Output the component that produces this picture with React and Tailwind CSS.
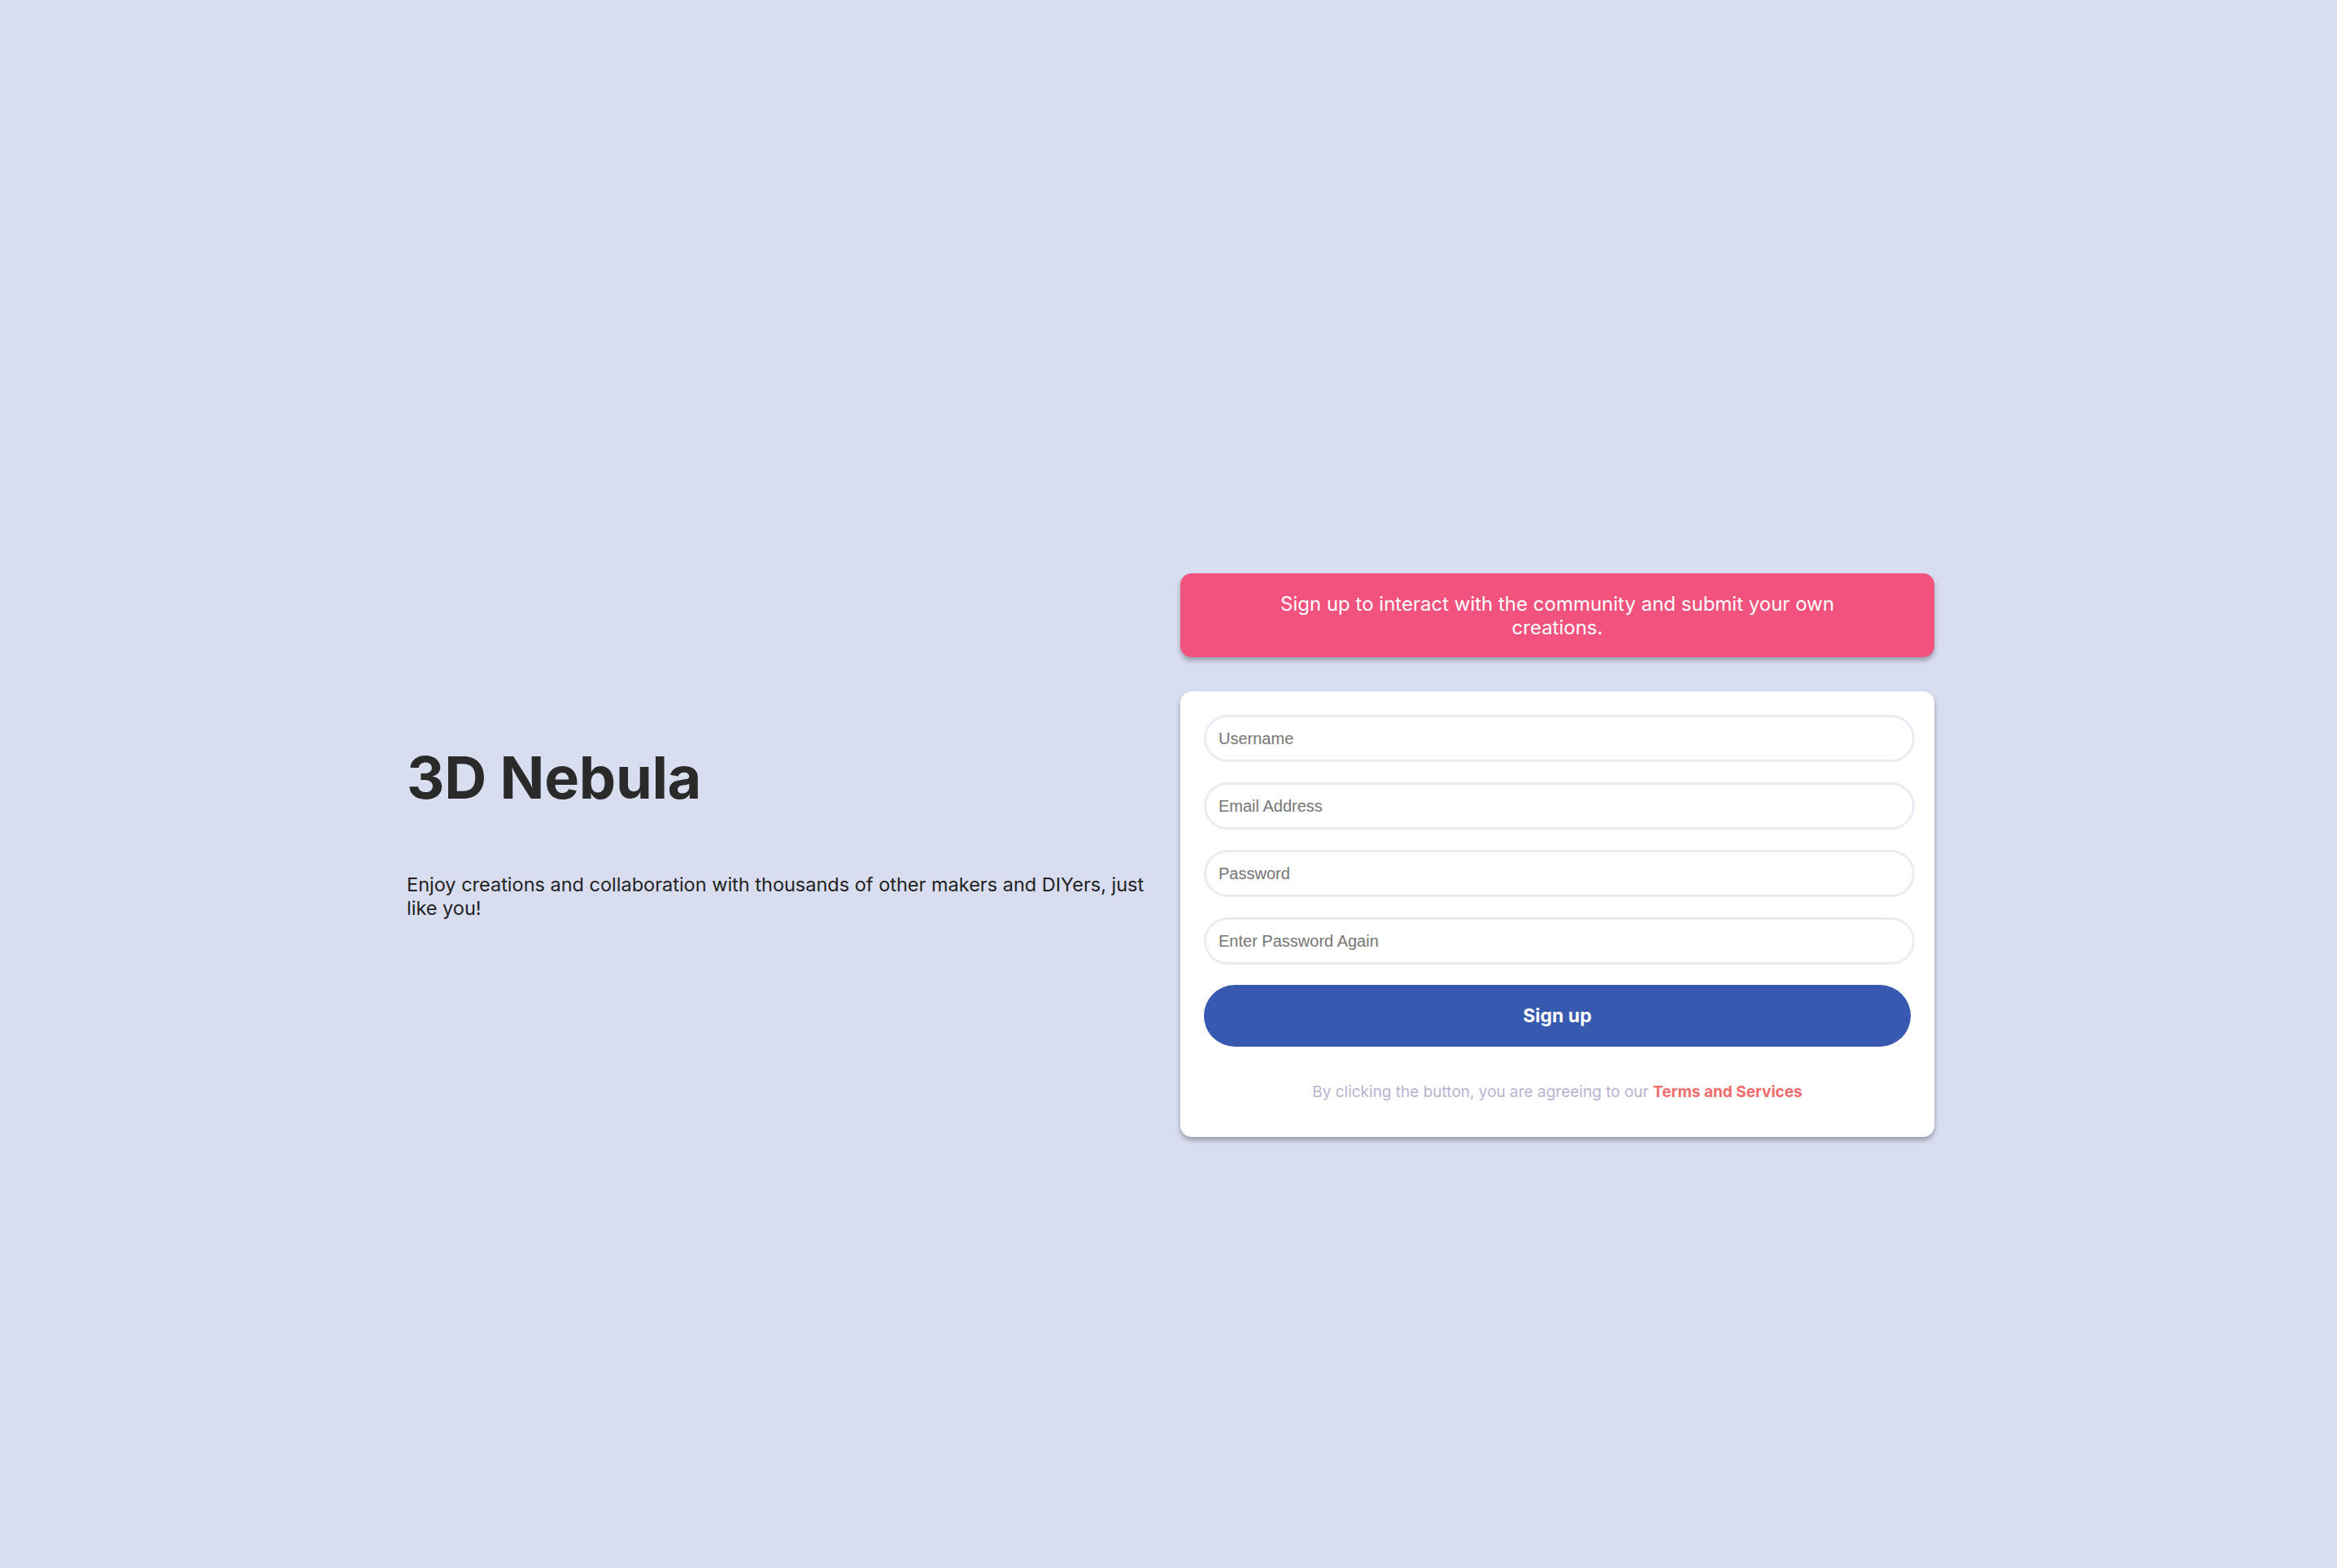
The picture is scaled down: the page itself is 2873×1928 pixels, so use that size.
import { useState } from "react";

export default function App() {
  const [form, setForm] = useState({
    username: "",
    email: "",
    password: "",
    confirm: "",
  });

  const update = (field) => (e) => setForm({ ...form, [field]: e.target.value });

  const fields = [
    { key: "username", type: "text", placeholder: "Username" },
    { key: "email", type: "email", placeholder: "Email Address" },
    { key: "password", type: "password", placeholder: "Password" },
    { key: "confirm", type: "password", placeholder: "Enter Password Again" },
  ];

  return (
    <div className="h-screen overflow-hidden bg-[#d8ddf0] font-['Inter',sans-serif] pt-[705px] pl-[5px]">
      <div className="mx-auto w-[1878px] grid grid-cols-[921px_927px] gap-x-[30px]">
        {/* Intro */}
        <div className="pt-[208px] text-[#2a2a2a]">
          <h1 className="text-[72px] leading-[86px] font-bold tracking-[-0.3px]">3D Nebula</h1>
          <p className="mt-[74px] text-[23.5px] leading-[29px] text-[#222]">
            Enjoy creations and collaboration with thousands of other makers and DIYers, just like you!
          </p>
        </div>

        {/* Sign up */}
        <div className="flex flex-col">
          <div className="h-[103px] rounded-[14px] bg-[#f2527e] shadow-[0_4px_6px_rgba(0,0,0,0.3)] flex items-center justify-center px-[110px] text-center text-white text-[24px] leading-[29px]">
            Sign up to interact with the community and submit your own creations.
          </div>

          <form
            onSubmit={(e) => e.preventDefault()}
            className="mt-[42px] rounded-[14px] bg-white shadow-[0_4px_6px_rgba(0,0,0,0.3)] pt-[29px] px-[29px] pb-[40px]"
          >
            <div className="flex flex-col gap-[25px]">
              {fields.map((f) => (
                <input
                  key={f.key}
                  type={f.type}
                  placeholder={f.placeholder}
                  value={form[f.key]}
                  onChange={update(f.key)}
                  className="w-[calc(100%+5px)] h-[58px] rounded-full border-[3px] border-[#ebebf3] bg-white px-[15px] font-['Liberation_Sans',Arial,sans-serif] text-[20px] text-[#333] placeholder:text-[#757575] outline-none"
                />
              ))}
            </div>

            <button
              type="submit"
              className="mt-[25px] w-full h-[76px] rounded-full bg-[#3859b0] text-white text-[23px] font-bold"
            >
              Sign up
            </button>

            <p className="mt-[42px] text-center text-[19px] text-[#b7b3d3]">
              By clicking the button, you are agreeing to our{" "}
              <span className="font-bold text-[#f26b6b]">Terms and Services</span>
            </p>
          </form>
        </div>
      </div>
    </div>
  );
}
